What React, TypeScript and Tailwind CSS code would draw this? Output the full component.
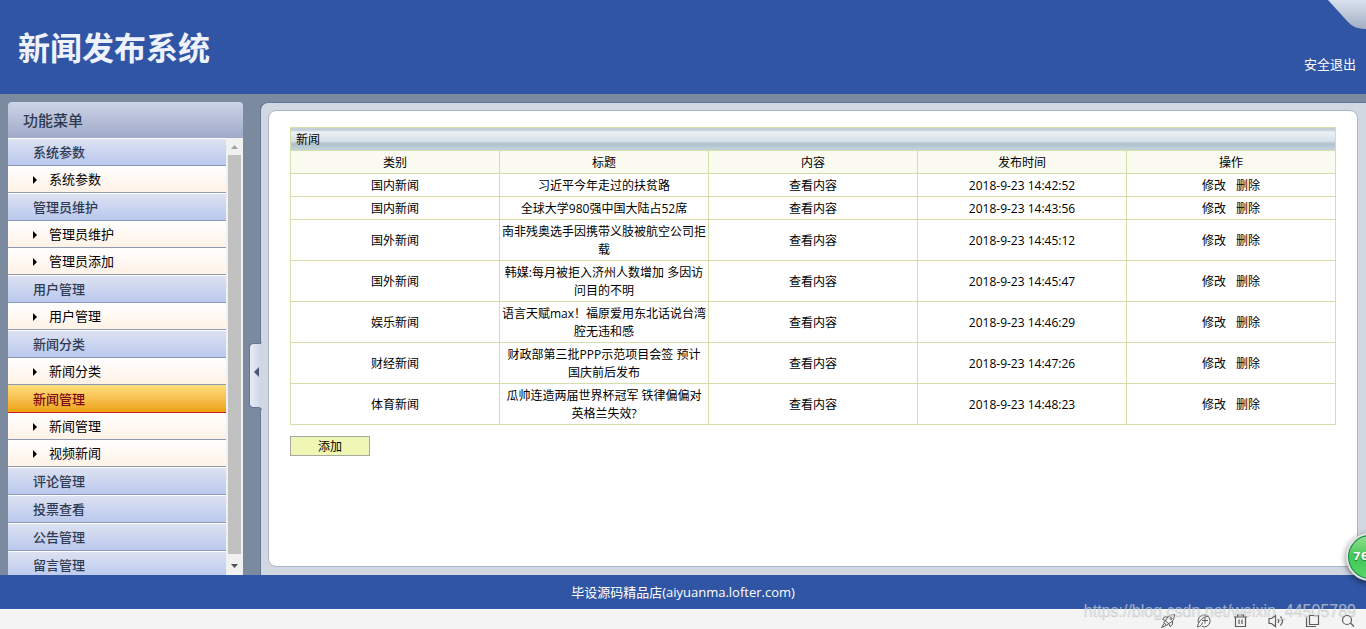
import clsx from "clsx";

type MenuGroup = {
  title: string;
  items: string[];
  active?: boolean;
};

type NewsRow = {
  category: string;
  title: string;
  time: string;
};

const menuGroups: MenuGroup[] = [
  { title: "系统参数", items: ["系统参数"] },
  { title: "管理员维护", items: ["管理员维护", "管理员添加"] },
  { title: "用户管理", items: ["用户管理"] },
  { title: "新闻分类", items: ["新闻分类"] },
  { title: "新闻管理", items: ["新闻管理", "视频新闻"], active: true },
  { title: "评论管理", items: [] },
  { title: "投票查看", items: [] },
  { title: "公告管理", items: [] },
  { title: "留言管理", items: [] },
];

const columns = ["类别", "标题", "内容", "发布时间", "操作"];

// the word joiner keeps 国庆 on one line
const news: NewsRow[] = [
  { category: "国内新闻", title: "习近平今年走过的扶贫路", time: "2018-9-23 14:42:52" },
  { category: "国内新闻", title: "全球大学980强中国大陆占52席", time: "2018-9-23 14:43:56" },
  { category: "国外新闻", title: "南非残奥选手因携带义肢被航空公司拒载", time: "2018-9-23 14:45:12" },
  { category: "国外新闻", title: "韩媒:每月被拒入济州人数增加 多因访问目的不明", time: "2018-9-23 14:45:47" },
  { category: "娱乐新闻", title: "语言天赋max！福原爱用东北话说台湾腔无违和感", time: "2018-9-23 14:46:29" },
  { category: "财经新闻", title: "财政部第三批PPP示范项目会签 预计国\u2060庆前后发布", time: "2018-9-23 14:47:26" },
  { category: "体育新闻", title: "瓜帅连造两届世界杯冠军 铁律偏偏对英格兰失效?", time: "2018-9-23 14:48:23" },
];

const Header = () => {
  return (
    <header className="relative flex h-[94px] shrink-0 items-center justify-between bg-[#2f55a4] pl-[18px] pr-[10px]">
      <h1 className="pt-[2px] text-[32px] leading-[48px] font-bold text-[#eef2fd]">
        新闻发布系统
      </h1>
      <a href="#" className="mt-[34px] text-[13px] leading-[18px] text-white">
        安全退出
      </a>
      <svg
        className="absolute top-0 right-0"
        width="38"
        height="29"
        viewBox="0 0 38 29"
        aria-hidden="true"
      >
        <defs>
          <linearGradient id="corner" x1="0" y1="0" x2="0" y2="1">
            <stop offset="0" stopColor="#d9e2ee" />
            <stop offset="1" stopColor="#a3aec4" />
          </linearGradient>
        </defs>
        <path d="M0 0H38V29C30 29 25 27 20 22Z" fill="url(#corner)" />
      </svg>
    </header>
  );
};

const MenuSection = ({ title, items, active }: MenuGroup) => {
  return (
    <li>
      <button
        type="button"
        className={clsx(
          "block h-7 w-full border-t border-b bg-linear-to-b pl-[25px] text-left text-[13px] leading-[26px] font-medium",
          active
            ? "border-t-[#fbe08a] border-b-[#c8202a] from-[#ffdc78] to-[#eda202] text-[#7d0a14]"
            : "border-t-white border-b-[#8d98b8] from-[#dde2f2] to-[#bac8ee] text-[#2f3b52]",
        )}
      >
        {title}
      </button>
      {items.length > 0 && (
        <ul>
          {items.map((item) => (
            <li key={item}>
              <a
                href="#"
                className="flex h-[27px] items-center border-b border-[#8f99b2] bg-linear-to-b from-white to-[#fff2e6] pl-[25px] text-[13px] leading-[26px] text-black"
              >
                <svg className="mr-3" width="4" height="10" viewBox="0 0 4 10" aria-hidden="true">
                  <path d="M0 2L4 6L0 10Z" fill="#000" />
                </svg>
                {item}
              </a>
            </li>
          ))}
        </ul>
      )}
    </li>
  );
};

const ScrollTrack = () => {
  return (
    <div className="flex w-[17px] shrink-0 flex-col items-center bg-[#f1f1f1]" aria-hidden="true">
      <svg width="17" height="17" viewBox="0 0 17 17">
        <path d="M5 11L8.500 7L12 11Z" fill="#a3a3a3" />
      </svg>
      <div className="w-[13px] flex-1 bg-[#c1c1c1]" />
      <svg className="mt-1" width="17" height="17" viewBox="0 0 17 17">
        <path d="M5 6L8.500 10L12 6Z" fill="#505050" />
      </svg>
    </div>
  );
};

const Sidebar = () => {
  return (
    <aside className="mt-2 ml-2 flex w-[235px] shrink-0 flex-col">
      <h2 className="h-9 shrink-0 rounded-t bg-linear-to-b from-[#cdd5e8] to-[#a0a9c8] pl-[15px] text-[15px] leading-9 font-medium text-[#2f3b52]">
        功能菜单
      </h2>
      <div className="flex min-h-0 flex-1">
        <nav className="flex-1 overflow-hidden">
          <ul>
            {menuGroups.map((group) => (
              <MenuSection key={group.title} {...group} />
            ))}
          </ul>
        </nav>
        <ScrollTrack />
      </div>
    </aside>
  );
};

const CollapseHandle = () => {
  return (
    <button
      type="button"
      aria-label="收起菜单"
      className="absolute top-[239px] -left-3 h-[68px] w-[13px]"
    >
      <svg width="13" height="68" viewBox="0 0 13 68">
        <defs>
          <linearGradient id="handle" x1="0" y1="0" x2="1" y2="0">
            <stop offset="0" stopColor="#e6ebf6" />
            <stop offset="1" stopColor="#ccd4e4" />
          </linearGradient>
        </defs>
        <path
          d="M13 0C12 2 11 2 9 2H4Q1 2 1 5V62Q1 65 4 65H9C11 65 12 66 13 68Z"
          fill="url(#handle)"
        />
        <path
          d="M12.500 0C12 1.500 11 1.500 9 1.500H4Q.5 1.500 .5 5V62Q.5 65.500 4 65.500H9C11 65.500 12 66 12.500 68"
          fill="none"
          stroke="#66759a"
        />
        <path d="M10 25V35L5 30Z" fill="#4a5878" />
      </svg>
    </button>
  );
};

const NewsTable = () => {
  return (
    <table className="w-full table-fixed border-collapse text-center text-[12px] leading-[18px] text-black">
      <thead>
        <tr>
          <th
            colSpan={5}
            className="border border-[#d3dfa9] bg-[linear-gradient(to_bottom,#c3ced8_0,#c3ced8_2px,#edf2f7_3px,#d6e0e8_13px,#b0c1cc_15px,#b4c5d0_17px,#c6d6e0_100%)] px-[5px] pt-[3px] pb-px text-left font-normal"
          >
            新闻
          </th>
        </tr>
        <tr className="bg-[#fafaf1]">
          {columns.map((column) => (
            <th key={column} className="border border-[#d3dfa9] pt-[3px] pb-px font-normal">
              {column}
            </th>
          ))}
        </tr>
      </thead>
      <tbody>
        {news.map((row) => (
          <tr key={row.time}>
            <td className="border border-[#d3dfa9] pt-[3px] pb-px">{row.category}</td>
            <td className="border border-[#d3dfa9] px-px pt-[3px] pb-px">{row.title}</td>
            <td className="border border-[#d3dfa9] pt-[3px] pb-px">
              <a href="#">查看内容</a>
            </td>
            <td className="border border-[#d3dfa9] pt-[3px] pb-px">{row.time}</td>
            <td className="border border-[#d3dfa9] pt-[3px] pb-px">
              <a href="#" className="mr-[10px]">
                修改
              </a>
              <a href="#">删除</a>
            </td>
          </tr>
        ))}
      </tbody>
    </table>
  );
};

const Content = () => {
  return (
    <main className="relative mt-2 ml-[17px] flex min-w-0 flex-1 rounded-tl-lg border-t border-l border-[#66759a] bg-[#d1d8e2] pt-[7px] pr-2 pb-2 pl-[7px]">
      <CollapseHandle />
      <section className="flex-1 rounded-lg border border-[#aab3ca] bg-white px-[21px] pt-4">
        <NewsTable />
        <button
          type="button"
          className="mt-[11px] block h-5 w-20 border border-[#a5a8a0] bg-[#f0f6b4] pt-px text-[12px] leading-[18px] text-black"
        >
          添加
        </button>
      </section>
    </main>
  );
};

const StatusBar = () => {
  return (
    <div className="flex h-5 shrink-0 items-end justify-end gap-5 border-t border-white bg-[#f4f4f4] pr-[10px] pb-px text-[#5c5c5c]">
      <button type="button" aria-label="加速">
        <svg width="16" height="14" viewBox="0 0 16 14" fill="none" stroke="currentColor">
          <path d="M14.500 .5C10.500 .5 7.500 2.500 5.500 7L8.500 9.500C12.500 8 14.500 5 14.500 .5Z" />
          <path d="M8 3H4.500L2.500 5.500L6 6.500M12.500 7V10.500L10 12.500L9 9.500M5.500 7L3.500 8.500L7 11.500L8.500 9.500M4 9.500L1.500 13.500L6 11.500" />
          <circle cx="11" cy="4.500" r="1" />
        </svg>
      </button>
      <button type="button" aria-label="浏览器">
        <svg width="16" height="14" viewBox="0 0 16 14" fill="none" stroke="currentColor">
          <path d="M2.500 9A6 6 0 1 1 6 12.500" />
          <path d="M1.500 13C2 8 6 3 12.500 2M1.500 13C4.500 12.500 6 11 6.500 8.500M6 6.500H12M9 3.500V9.500" />
        </svg>
      </button>
      <button type="button" aria-label="清理">
        <svg width="16" height="14" viewBox="0 0 16 14" fill="none" stroke="currentColor" strokeWidth="1.200">
          <path d="M2 3H15M5.500 3V1H11.500V3M3.500 3V12.500H13.500V3M7 5.500V10M10 5.500V10" />
        </svg>
      </button>
      <button type="button" aria-label="声音">
        <svg width="16" height="14" viewBox="0 0 16 14" fill="none" stroke="currentColor" strokeWidth="1.200">
          <path d="M7.500 1.500L3.500 4.500H1V9.500H3.500L7.500 12.500ZM10 5Q11.500 7 10 9M12.500 2.500Q16.500 7 12.500 11.500" />
        </svg>
      </button>
      <button type="button" aria-label="窗口">
        <svg width="16" height="14" viewBox="0 0 16 14" fill="none" stroke="currentColor" strokeWidth="1.200">
          <path d="M5.500 1.500H14.500V10.500H5.500ZM2.500 3.500V12.500H12" />
        </svg>
      </button>
      <button type="button" aria-label="缩放">
        <svg width="16" height="14" viewBox="0 0 16 14" fill="none" stroke="currentColor" strokeWidth="1.200">
          <circle cx="7" cy="6" r="4.500" />
          <path d="M10.500 9L14 12.500" />
        </svg>
      </button>
    </div>
  );
};

export default function App() {
  return (
    <div className="relative flex h-screen flex-col overflow-hidden bg-[#7b8a9f] font-['Open_Sans','Noto_Sans_CJK_SC',sans-serif]">
      <Header />
      <div className="flex min-h-0 flex-1">
        <Sidebar />
        <Content />
      </div>
      <footer className="h-[34px] shrink-0 bg-[#2f55a4] text-center text-[13px] leading-[34px] text-white">
        毕设源码精品店(aiyuanma.lofter.com)
      </footer>
      <StatusBar />
      <div className="absolute right-[10px] bottom-2 font-['Liberation_Sans',sans-serif] text-[16px] leading-5 text-[#e6e9f0]/60 [text-shadow:0_1px_1px_#80808066]">
        https://blog.csdn.net/weixin_44505789
      </div>
      {/* speed ball, half off the right edge */}
      <div className="absolute -right-7 bottom-12 flex size-12 items-center rounded-full border-2 border-[#e4e4e4] bg-[#168a4c] p-px shadow-[0_2px_6px_#0008]">
        <div className="flex size-full items-center rounded-full bg-linear-to-b from-[#8fdf8c] via-[#40c757] to-[#5ad468] pl-1 font-['DejaVu_Sans',sans-serif] text-[11px] font-bold text-white [text-shadow:0_1px_1px_#1c7a35]">
          76
        </div>
      </div>
    </div>
  );
}
